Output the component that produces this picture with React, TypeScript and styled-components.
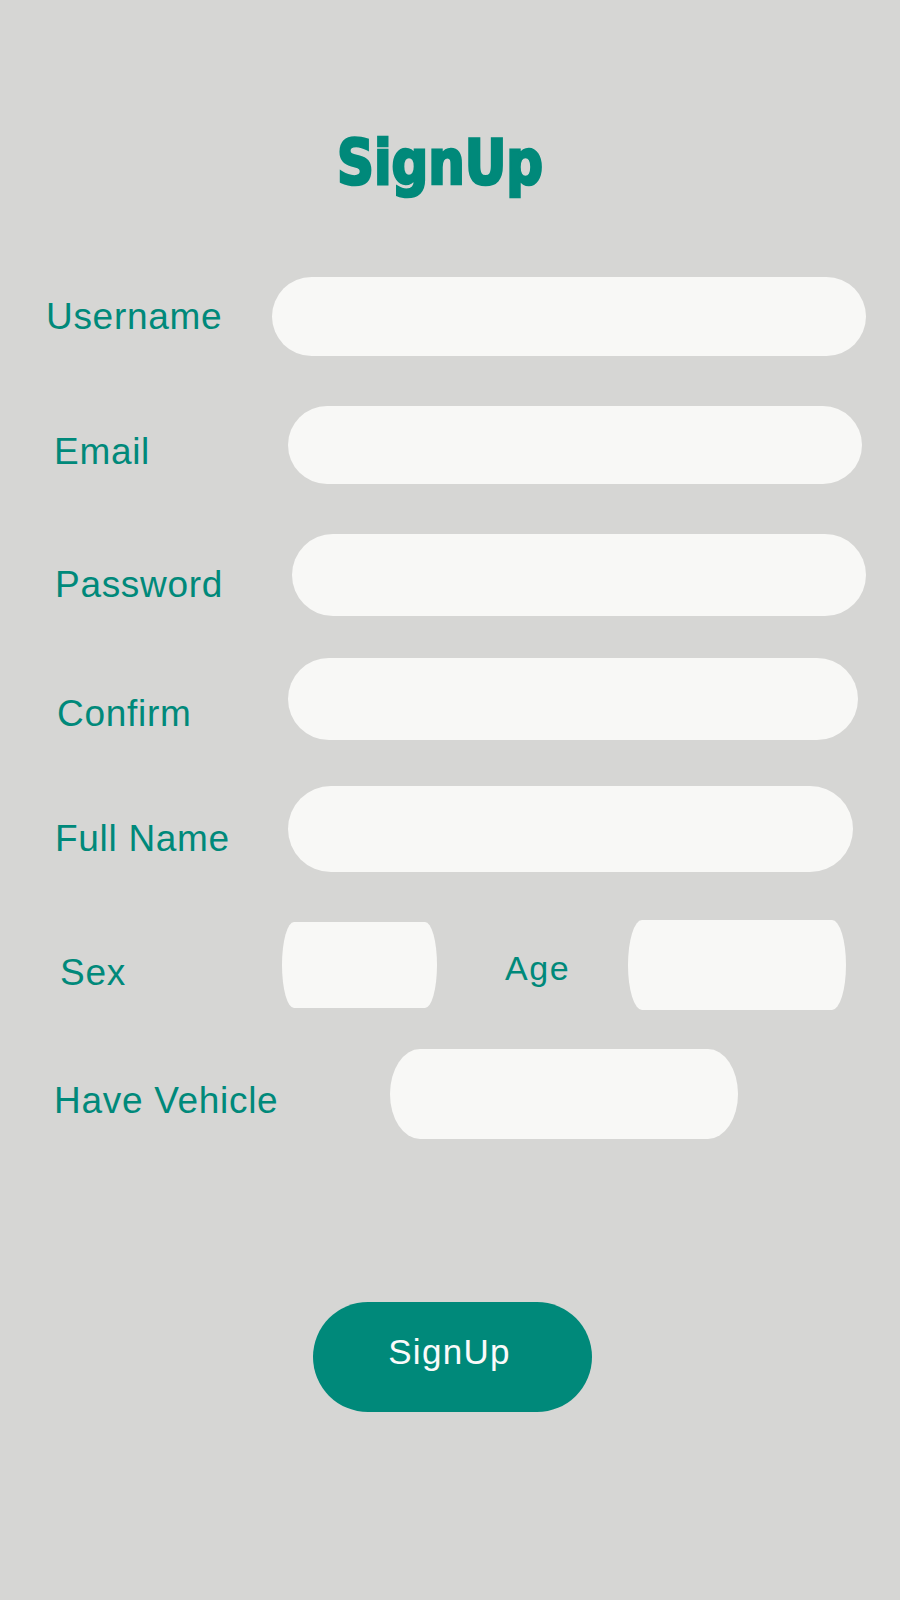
import styled, { createGlobalStyle } from "styled-components";

const tealColor = "#00897a";
const pageColor = "#d6d6d4";
const fieldColor = "#f8f8f6";

const GlobalStyle = createGlobalStyle`
  html, body {
    margin: 0;
    padding: 0;
    background-color: ${pageColor};
  }
  * {
    box-sizing: border-box;
  }
`;

const Page = styled.main`
  min-height: 1600px;
  width: 900px;
  padding-top: 136px;
  display: flex;
  flex-direction: column;
  font-family: "Liberation Sans", Arial, sans-serif;
`;

const Title = styled.h1`
  margin: 0;
  padding-right: 20px;
  text-align: center;
  font-family: "DejaVu Sans Condensed", "DejaVu Sans", sans-serif;
  font-stretch: condensed;
  font-weight: 700;
  font-size: 57px;
  line-height: 1;
  letter-spacing: 0;
  color: ${tealColor};
  -webkit-text-stroke: 2.4px ${tealColor};
  transform: scaleY(1.1);
  transform-origin: 50% 80%;
`;

const Form = styled.form`
  display: flex;
  flex-direction: column;
  margin: 84px 0 0;
`;

const Row = styled.div<{ $gap: number; $h: number }>`
  display: flex;
  align-items: center;
  height: ${(p) => p.$h}px;
  margin-top: ${(p) => p.$gap}px;
`;

const Label = styled.label<{ $x: number; $w: number; $drop: number; $size?: number }>`
  flex-shrink: 0;
  width: ${(p) => p.$w}px;
  padding-left: ${(p) => p.$x}px;
  padding-top: ${(p) => p.$drop * 2}px;
  font-size: ${(p) => p.$size ?? 37}px;
  line-height: 1;
  letter-spacing: ${(p) => (p.$size ? 1.6 : 0.7)}px;
  color: ${tealColor};
  white-space: nowrap;
`;

const Field = styled.input<{ $w: number; $h: number; $radius?: string }>`
  flex-shrink: 0;
  width: ${(p) => p.$w}px;
  height: ${(p) => p.$h}px;
  border: none;
  outline: none;
  padding: 0 32px;
  border-radius: ${(p) => p.$radius ?? "999px"};
  background-color: ${fieldColor};
  font-family: inherit;
  font-size: 28px;
  color: #333;
`;

const ButtonRow = styled.div`
  display: flex;
  margin-top: 163px;
  padding-left: 313px;
`;

const SubmitButton = styled.button`
  width: 279px;
  height: 110px;
  border: none;
  border-radius: 55px;
  padding: 0 6px 11px 0;
  background-color: ${tealColor};
  color: #fafafa;
  font-family: "Liberation Sans", Arial, sans-serif;
  font-size: 35px;
  letter-spacing: 1.3px;
  cursor: pointer;
`;

type TextRow = {
  label: string;
  type: string;
  gap: number;
  h: number;
  labelX: number;
  fieldX: number;
  fieldW: number;
  drop: number;
};

const textRows: TextRow[] = [
  { label: "Username", type: "text", gap: 0, h: 79, labelX: 46, fieldX: 272, fieldW: 594, drop: 0 },
  { label: "Email", type: "email", gap: 50, h: 78, labelX: 54, fieldX: 288, fieldW: 574, drop: 6.5 },
  { label: "Password", type: "password", gap: 50, h: 82, labelX: 55, fieldX: 292, fieldW: 574, drop: 9 },
  { label: "Confirm", type: "password", gap: 42, h: 82, labelX: 57, fieldX: 288, fieldW: 570, drop: 14 },
  { label: "Full Name", type: "text", gap: 46, h: 86, labelX: 55, fieldX: 288, fieldW: 565, drop: 9.5 },
];

export default function App() {
  return (
    <>
      <GlobalStyle />
      <Page>
        <Title>SignUp</Title>
        <Form onSubmit={(e) => e.preventDefault()}>
          {textRows.map((row) => (
            <Row key={row.label} $gap={row.gap} $h={row.h}>
              <Label $x={row.labelX} $w={row.fieldX} $drop={row.drop}>
                {row.label}
              </Label>
              <Field type={row.type} $w={row.fieldW} $h={row.h} />
            </Row>
          ))}
          <Row $gap={48} $h={90}>
            <Label $x={60} $w={282} $drop={7}>
              Sex
            </Label>
            <Field type="text" $w={155} $h={86} $radius="12px / 50%" />
            <Label $x={68} $w={191} $drop={2.5} $size={34}>
              Age
            </Label>
            <Field type="number" $w={218} $h={90} $radius="14px / 50%" />
          </Row>
          <Row $gap={39} $h={90}>
            <Label $x={54} $w={390} $drop={6}>
              Have Vehicle
            </Label>
            <Field type="text" $w={348} $h={90} $radius="30px / 50%" />
          </Row>
          <ButtonRow>
            <SubmitButton type="submit">SignUp</SubmitButton>
          </ButtonRow>
        </Form>
      </Page>
    </>
  );
}
